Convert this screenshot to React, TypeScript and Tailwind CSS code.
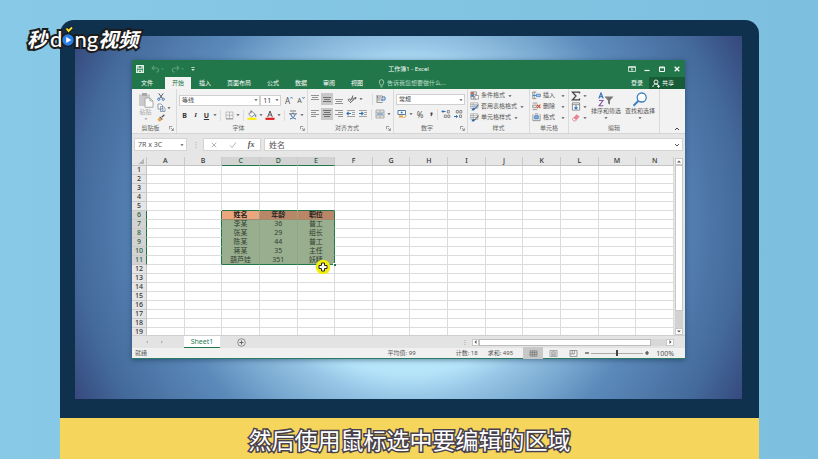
import React from "react";

type Kids = { children?: React.ReactNode };

function Caret({ className = "" }: { className?: string }) {
  return (
    <svg viewBox="0 0 6 6" className={`h-[6px] w-[6px] shrink-0 ${className}`} aria-hidden="true">
      <path d="M1.4 2.2h3.2L3 4.1z" fill="#555" />
    </svg>
  );
}

function Sep() {
  return <span className="mx-[2px] h-[11px] w-px shrink-0 bg-[#dcdcdc]" />;
}

function Tool({
  label,
  className = "w-[12px]",
  active = false,
  children,
}: Kids & { label: string; className?: string; active?: boolean }) {
  return (
    <button
      type="button"
      aria-label={label}
      className={`flex h-[12px] shrink-0 items-center justify-center ${active ? "bg-[#c8c8c8]" : ""} ${className}`}
    >
      {children}
    </button>
  );
}

function Group({ label, className = "", launcher = false, children }: Kids & { label: string; className?: string; launcher?: boolean }) {
  return (
    <section aria-label={label} className={`flex shrink-0 flex-col border-r border-[#dadada] ${className}`}>
      <div className="h-[35px]">{children}</div>
      <div className="flex h-[9px] items-center text-[#666]">
        <span className="flex-1 text-center">{label}</span>
        {launcher && (
          <svg viewBox="0 0 6 6" className="mr-[2px] h-[5px] w-[5px]" aria-hidden="true">
            <path d="M.5 4V.5H4M2.5 2.5l2.5 2.5M5.3 2.8v2.5H2.8" fill="none" stroke="#666" strokeWidth=".8" />
          </svg>
        )}
      </div>
    </section>
  );
}

function Lines({ rows, color = "#888" }: { rows: [number, number, number][]; color?: string }) {
  return (
    <svg viewBox="0 0 10 10" className="h-[10px] w-[10px]" aria-hidden="true">
      {rows.map(([x1, x2, y]) => (
        <path key={y} d={`M${x1} ${y}H${x2}`} stroke={color} strokeWidth=".9" />
      ))}
    </svg>
  );
}

function Indent({ out = false }: { out?: boolean }) {
  return (
    <svg viewBox="0 0 10 10" className="h-[10px] w-[10px]" aria-hidden="true">
      <path d="M1 1.5h8M6 3.5h3M6 5.5h3M1 7.5h8" stroke="#999" strokeWidth=".9" />
      <path d={out ? "M5 4.5H1M2.6 2.9L1 4.5l1.6 1.6" : "M1 4.5h4M3.4 2.9L5 4.5 3.4 6.1"} fill="none" stroke="#2f6eb5" strokeWidth="1.1" />
    </svg>
  );
}

function SheetIcon({ kind }: { kind: "cond" | "table" | "cell" | "insert" | "delete" | "format" }) {
  return (
    <svg viewBox="0 0 10 10" className="h-[9px] w-[9px] shrink-0" aria-hidden="true">
      {kind === "cond" && (
        <>
          <path d="M1 1h6v8H1zM1 3.6h6M1 6.3h6M4 1v8" fill="#fff" stroke="#777" strokeWidth=".8" />
          <path d="M1.3 1.3h2.5v2.2H1.3z" fill="#d0583f" />
          <path d="M1.3 4h2.5v2.2H1.3z" fill="#3c78bd" />
          <path d="M5.5 5h4v4h-4z" fill="#fff" stroke="#777" strokeWidth=".7" />
        </>
      )}
      {(kind === "table" || kind === "cell") && (
        <>
          <path d="M.8 1h8v6h-8zM.8 3h8M.8 5h8M3.5 1v6" fill="#fff" stroke="#999" strokeWidth=".8" />
          {kind === "table" && <path d="M3.7 3.2h4.8v3.6H3.7z" fill="#a8c8ea" />}
          <path d="M9.5 3L5 8" stroke="#555" strokeWidth="1.1" />
          <path d="M1.8 9.3c.4-2.3 2-3 3.6-2.2.6 1.8-1.3 2.6-3.6 2.2z" fill="#2f6eb5" />
        </>
      )}
      {kind === "insert" && (
        <>
          <path d="M.8 1.2h4M.8 8.5h4M.8 1v7.5M3 1v2M3 7v1.5" stroke="#777" strokeWidth=".8" />
          <path d="M5 3.5h4.3v2.8H5z" fill="#a8c8ea" stroke="#2f6eb5" strokeWidth=".7" />
          <path d="M4.6 4.9H1.5M2.8 3.6L1.5 4.9l1.3 1.3" fill="none" stroke="#2f6eb5" />
        </>
      )}
      {kind === "delete" && (
        <>
          <path d="M.8 1.2h5M.8 8.5h5M.8 3.5h4v2.8h-4z" fill="none" stroke="#777" strokeWidth=".8" />
          <path d="M5.5 3l3.8 3.8M9.3 3L5.5 6.8" stroke="#cf4632" strokeWidth="1.2" />
        </>
      )}
      {kind === "format" && (
        <>
          <path d="M1 1.5v7h8v-7M3 1h4" fill="none" stroke="#777" strokeWidth=".8" />
          <path d="M3 3h4v3.5H3z" fill="#7fb0e0" stroke="#2f6eb5" strokeWidth=".8" />
        </>
      )}
    </svg>
  );
}

function MenuRow({ kind, label, spread = false }: { kind: React.ComponentProps<typeof SheetIcon>["kind"]; label: string; spread?: boolean }) {
  return (
    <button type="button" className="flex h-[11px] w-full items-center gap-[2px]">
      <SheetIcon kind={kind} />
      <span className="whitespace-nowrap">{label}</span>
      <Caret className={spread ? "ml-auto" : ""} />
    </button>
  );
}

function Picker({ label, value, className = "" }: { label: string; value: string; className?: string }) {
  return (
    <label className={`flex h-[11px] items-center border border-[#d0d0d0] bg-white ${className}`}>
      <select aria-label={label} defaultValue={value} className="h-[9px] min-w-0 flex-1 appearance-none bg-transparent pl-[2px] leading-[9px] text-[#444] outline-none">
        <option>{value}</option>
      </select>
      <Caret />
    </label>
  );
}

function TitleBar() {
  return (
    <header className="flex h-[17px] items-center bg-[#21774a] text-white">
      <div className="flex flex-1 items-center pl-[4px]">
        <button type="button" aria-label="保存" className="mr-[7px]">
          <svg viewBox="0 0 8 8" className="block h-[8px] w-[8px]"><path d="M.6.6h6.8v6.8H.6zM2 .6v2.6h4V.6M2.3 7.4V5.2h3.4v2.2" fill="none" stroke="#e8f5ed" strokeWidth="1.1" /></svg>
        </button>
        <button type="button" aria-label="撤消" className="mr-[7px] flex">
          <svg viewBox="0 0 9 8" className="h-[8px] w-[9px]"><path d="M1 3h4.5c2.8 0 2.8 4 0 4M3.2.8L1 3l2.2 2.2" fill="none" stroke="#5a9c79" strokeWidth="1.1" /></svg>
          <svg viewBox="0 0 4 8" className="h-[8px] w-[4px]"><path d="M1 3.5h3L2.5 5z" fill="#5a9c79" /></svg>
        </button>
        <button type="button" aria-label="恢复" className="mr-[6px] flex">
          <svg viewBox="0 0 9 8" className="h-[8px] w-[9px]"><path d="M8 3H3.5C.7 3 .7 7 3.5 7M5.8.8L8 3 5.8 5.2" fill="none" stroke="#5a9c79" strokeWidth="1.1" /></svg>
          <svg viewBox="0 0 4 8" className="h-[8px] w-[4px]"><path d="M1 3.5h3L2.5 5z" fill="#5a9c79" /></svg>
        </button>
        <button type="button" aria-label="自定义">
          <svg viewBox="0 0 6 8" className="block h-[8px] w-[6px]"><path d="M1.3 2.5h3.4" stroke="#d5eadd" strokeWidth=".8" /><path d="M1.2 4h3.6L3 5.9z" fill="#d5eadd" /></svg>
        </button>
      </div>
      <h1 className="pt-[2px] text-[6px]">工作簿1 - Excel</h1>
      <div className="flex flex-1 items-center justify-end gap-[7px] pr-[4px]">
        <button type="button" aria-label="功能区显示选项">
          <svg viewBox="0 0 8 8" className="block h-[8px] w-[8px]"><path d="M.5 1.5h7v5h-7zM.5 2.5h7M4 6V3.5M2.9 4.6L4 3.5l1.1 1.1" fill="none" stroke="#e3f2e9" strokeWidth=".8" /></svg>
        </button>
        <button type="button" aria-label="最小化">
          <svg viewBox="0 0 8 8" className="block h-[8px] w-[8px]"><path d="M1.5 5.5h5" stroke="#fff" strokeWidth="1.2" /></svg>
        </button>
        <button type="button" aria-label="最大化">
          <svg viewBox="0 0 8 8" className="block h-[8px] w-[8px]"><path d="M1.5 2h5v4.5h-5zM1.5 2.8h5" fill="none" stroke="#fff" /></svg>
        </button>
        <button type="button" aria-label="关闭">
          <svg viewBox="0 0 8 8" className="block h-[8px] w-[8px]"><path d="M1.7 1.7l4.6 4.6M6.3 1.7L1.7 6.3" stroke="#fff" strokeWidth="1.3" /></svg>
        </button>
      </div>
    </header>
  );
}

const MENUS = ["文件", "开始", "插入", "页面布局", "公式", "数据", "审阅", "视图"];

function MenuBar() {
  return (
    <nav className="flex h-[12px] bg-[#21774a] text-white">
      {MENUS.map((m) => (
        <button
          key={m}
          type="button"
          className={`h-[12px] shrink-0 ${
            m === "开始"
              ? "w-[26px] bg-[#f3f3f3] text-[#21774a]"
              : m === "文件"
                ? "w-[33px] pr-[3px]"
                : m === "页面布局"
                  ? "w-[40px]"
                  : "w-[28px]"
          }`}
        >
          {m}
        </button>
      ))}
      <button type="button" className="ml-[7px] flex items-center gap-[2px] text-[#b9d9c7]">
        <svg viewBox="0 0 7 9" className="h-[9px] w-[7px]" aria-hidden="true"><path d="M2.5 6.2C2.5 5 1.2 4.5 1.2 3a2.3 2.3 0 014.6 0c0 1.5-1.3 2-1.3 3.2zM2.5 7.8h2" fill="none" stroke="#b9d9c7" strokeWidth=".8" /></svg>
        告诉我您想要做什么...
      </button>
      <button type="button" className="mr-[6px] ml-auto">登录</button>
      <button type="button" className="flex w-[36px] items-center gap-[2px] bg-[#185c37] pl-[3px]">
        <svg viewBox="0 0 8 9" className="h-[9px] w-[8px]" aria-hidden="true"><circle cx="4" cy="3" r="2" fill="none" stroke="#fff" strokeWidth=".9" /><path d="M.8 8c.2-2 1.5-3 3-3 1 0 1.7.3 2.2.9M5 7.3h3M6.5 5.8v3" fill="none" stroke="#fff" strokeWidth=".9" /></svg>
        共享
      </button>
    </nav>
  );
}

function Ribbon() {
  return (
    <div className="flex h-[45px] border-b border-[#d5d5d5] bg-[#f2f2f2] text-[#555]">
      <Group label="剪贴板" className="w-[45px]" launcher>
        <div className="flex pt-[2px] pl-[5px]">
          <button type="button" className="flex w-[17px] flex-col items-center pt-px text-[#aaa]">
            <svg viewBox="0 0 16 16" className="h-[16px] w-[16px]" aria-hidden="true"><path d="M1 2.5h11V14H1z" fill="#c9c9c9" /><path d="M4 1h5v3H4z" fill="#a9a9a9" /><path d="M7 6h5l3 3v6.3H7z" fill="#fafafa" stroke="#aaa" /><path d="M12 6v3h3" fill="none" stroke="#aaa" /></svg>
            <span className="leading-[8px]">粘贴</span>
            <Caret className="opacity-50" />
          </button>
          <div className="flex flex-col pl-[2px]">
            <Tool label="剪切" className="w-[10px]">
              <svg viewBox="0 0 9 9" className="h-[8px] w-[8px]"><path d="M2 .5l4 5.5M7 .5L3 6" stroke="#555" strokeWidth="1.1" /><circle cx="2" cy="7" r="1.3" fill="none" stroke="#2f6eb5" /><circle cx="7" cy="7" r="1.3" fill="none" stroke="#2f6eb5" /></svg>
            </Tool>
            <div className="flex h-[9px] items-center">
              <Tool label="复制" className="w-[10px]">
                <svg viewBox="0 0 9 9" className="h-[9px] w-[9px]"><path d="M1 1h3l1.5 1.5V6H1zM3.5 3.5H6L8 5.3v3.2H3.5z" fill="#fff" stroke="#7886a0" strokeWidth=".8" /><path d="M4.7 6h2M4.7 7.3h2" stroke="#2f6eb5" strokeWidth=".6" /></svg>
              </Tool>
              <Caret />
            </div>
            <Tool label="格式刷" className="w-[10px]">
              <svg viewBox="0 0 9 9" className="h-[8px] w-[8px]"><path d="M8.3.8L5.3 3.6" stroke="#555" strokeWidth="1.5" /><path d="M3.5 2.8l3 3-1 .9-3-3z" fill="#555" /><path d="M2.5 3.9l2.8 2.8L3 8.6.5 6.5z" fill="#e9a13b" /></svg>
            </Tool>
          </div>
        </div>
      </Group>

      <Group label="字体" className="w-[131px]" launcher>
        <div className="flex items-center pt-[5px] pl-[2px]">
          <Picker label="字体" value="等线" className="w-[82px]" />
          <Picker label="字号" value="11" className="w-[21px] text-[7px]" />
          <Tool label="增大字号" className="ml-[2px] w-[12px]"><span className="text-[8px]">A</span><svg viewBox="0 0 3 8" className="h-[8px] w-[3px]"><path d="M.3 2.5L1.5 1l1.2 1.5" fill="none" stroke="#2f6eb5" strokeWidth=".8" /></svg></Tool>
          <Tool label="减小字号"><span className="text-[7px]">A</span><svg viewBox="0 0 3 8" className="h-[8px] w-[3px]"><path d="M.3 1L1.5 2.5 2.7 1" fill="none" stroke="#2f6eb5" strokeWidth=".8" /></svg></Tool>
        </div>
        <div className="flex items-center pt-[3px] pl-[2px] text-[7px] text-[#333]">
          <Tool label="加粗" className="w-[11px]"><b>B</b></Tool>
          <Tool label="倾斜" className="w-[11px]"><i className="font-['Liberation_Serif',serif] font-bold">I</i></Tool>
          <Tool label="下划线" className="w-[11px]"><b className="underline">U</b></Tool>
          <Caret />
          <Sep />
          <Tool label="边框"><svg viewBox="0 0 9 9" className="h-[9px] w-[9px]"><path d="M1 1h7v6.5H1zM4.5 1v6.5M1 4.2h7" fill="none" stroke="#aaa" strokeWidth=".7" /><path d="M1 8h7" stroke="#888" strokeWidth=".8" /></svg></Tool>
          <Caret />
          <Sep />
          <Tool label="填充颜色"><svg viewBox="0 0 10 10" className="h-[10px] w-[10px]"><path d="M4.5 1L8 4.3 4.7 7 1.7 4.2zM4 .5v3" fill="#fff" stroke="#666" strokeWidth=".8" /><path d="M8.7 4.5v2.3" stroke="#2f6eb5" /><path d="M.5 7.7h9v2.2h-9z" fill="#ffee00" /></svg></Tool>
          <Caret />
          <Tool label="字体颜色"><svg viewBox="0 0 10 10" className="h-[10px] w-[10px]"><path d="M2.7 7L5 1l2.3 6M3.5 5h3" fill="none" stroke="#555" /><path d="M.5 7.7h9v2.2h-9z" fill="#e01b1b" /></svg></Tool>
          <Caret />
          <Sep />
          <Tool label="拼音"><svg viewBox="0 0 10 10" className="h-[10px] w-[10px]"><path d="M2 1h6M1 3.8h8" stroke="#666" strokeWidth=".9" /><path d="M5 2.5v1.5M7.3 4C6.5 7 4.5 8.5 2 9M2.7 4C3.5 7 5.5 8.5 8 9" fill="none" stroke="#3d6da8" /></svg></Tool>
          <Caret />
        </div>
      </Group>

      <Group label="对齐方式" className="w-[86px]" launcher>
        <div className="flex items-center pt-[4px] pl-[1px]">
          <Tool label="顶端对齐"><Lines rows={[[1, 9, 1.5], [2, 8, 3.5], [1, 9, 5.5]]} /></Tool>
          <Tool label="垂直居中" active><Lines color="#666" rows={[[1, 9, 3.5], [2, 8, 5.5], [1, 9, 7.5]]} /></Tool>
          <Tool label="底端对齐"><Lines rows={[[1, 9, 5.5], [2, 8, 7.5], [1, 9, 9.5]]} /></Tool>
          <Tool label="方向" className="w-[13px]"><svg viewBox="0 0 10 10" className="h-[10px] w-[10px]"><path d="M1 6c1-2 3-1 2.5.5S.8 7 1.5 6M4 6l2-4.5M5 4c1.5-.5 2 1 .5 2M3 9l6-5.5M9 3.5L7.2 4M9 3.5L8.6 5.3" fill="none" stroke="#555" strokeWidth=".9" /></svg></Tool>
          <Caret />
          <span className="ml-[6px]" />
          <Sep />
          <Tool label="自动换行"><svg viewBox="0 0 10 10" className="h-[10px] w-[10px]"><path d="M1 1v8M1.5 2h5v2h-5zM1.5 6h3M1.5 8.5h5" fill="none" stroke="#777" strokeWidth=".8" /><path d="M7 3h2v3H5.5M6.8 4.7L5.5 6l1.3 1.3" fill="none" stroke="#2f6eb5" strokeWidth=".9" /></svg></Tool>
        </div>
        <div className="flex items-center pt-[3px] pl-[1px]">
          <Tool label="左对齐"><Lines rows={[[1, 9, 1.5], [1, 6, 3.5], [1, 9, 5.5], [1, 6, 7.5]]} /></Tool>
          <Tool label="居中" active><Lines color="#666" rows={[[1, 9, 1.5], [2, 8, 3.5], [1, 9, 5.5], [2, 8, 7.5]]} /></Tool>
          <Tool label="右对齐"><Lines rows={[[1, 9, 1.5], [4, 9, 3.5], [1, 9, 5.5], [4, 9, 7.5]]} /></Tool>
          <Tool label="减少缩进"><Indent out /></Tool>
          <Tool label="增加缩进"><Indent /></Tool>
          <Sep />
          <Tool label="合并后居中"><svg viewBox="0 0 10 10" className="h-[10px] w-[10px]"><path d="M1 1h8v8H1zM1 3.2h8M1 6.8h8M5 1v2.2M5 6.8V9" fill="none" stroke="#999" strokeWidth=".8" /><path d="M2 5h6" stroke="#2f6eb5" /></svg></Tool>
          <Caret />
        </div>
      </Group>

      <Group label="数字" className="w-[74px]" launcher>
        <div className="px-[2px] pt-[5px]">
          <Picker label="数字格式" value="常规" />
        </div>
        <div className="flex items-center pt-[3px] pl-[2px] text-[8px]">
          <Tool label="会计数字格式"><svg viewBox="0 0 10 10" className="h-[10px] w-[10px]"><path d="M1 1.5h7.5v4H1z" fill="#fff" stroke="#3d6da8" strokeWidth=".9" /><circle cx="4.7" cy="3.5" r="1" fill="#3d6da8" /><path d="M2 6.5h4v2H2z" fill="#e9a13b" /><path d="M6.5 8.5c2 0 2.5-1 2.5-2.5" fill="none" stroke="#e9a13b" /></svg></Tool>
          <Caret />
          <Tool label="百分比">%</Tool>
          <Tool label="千位分隔" className="w-[9px]"><svg viewBox="0 0 6 8" className="h-[8px] w-[6px]"><path d="M2.5 2.5h2v2L3.2 6.3l-.7-.4.6-1.4h-.6z" fill="#444" /></svg></Tool>
          <Sep />
          <Tool label="增加小数位数"><svg viewBox="0 0 10 10" className="h-[10px] w-[10px]"><path d="M4.5 2.5H1M2.3 1.2L1 2.5l1.3 1.3" fill="none" stroke="#2f6eb5" /><path d="M6.3 1.5h2v2.5h-2zM3.3 6h2v2.5h-2zM6.8 6h2v2.5h-2z" fill="none" stroke="#777" strokeWidth=".8" /></svg></Tool>
          <Tool label="减少小数位数"><svg viewBox="0 0 10 10" className="h-[10px] w-[10px]"><path d="M1 7.5h3.5M3.2 6.2L4.5 7.5 3.2 8.8" fill="none" stroke="#2f6eb5" /><path d="M3.3 1.5h2v2.5h-2zM6.8 1.5h2v2.5h-2zM6.5 6h2v2.5h-2z" fill="none" stroke="#777" strokeWidth=".8" /></svg></Tool>
        </div>
      </Group>

      <Group label="样式" className="w-[62px]">
        <div className="pt-px pl-[2px]">
          <MenuRow kind="cond" label="条件格式" />
          <MenuRow kind="table" label="套用表格格式" />
          <MenuRow kind="cell" label="单元格样式" />
        </div>
      </Group>

      <Group label="单元格" className="w-[39px]">
        <div className="px-[2px] pt-px">
          <MenuRow kind="insert" label="插入" spread />
          <MenuRow kind="delete" label="删除" spread />
          <MenuRow kind="format" label="格式" spread />
        </div>
      </Group>

      <Group label="编辑" className="w-[91px]">
        <div className="flex pt-px pl-[2px]">
          <div className="flex w-[18px] flex-col">
            <button type="button" aria-label="自动求和" className="flex h-[11px] items-center gap-px">
              <svg viewBox="0 0 10 10" className="h-[10px] w-[10px]"><path d="M8.5 2.5V1.2H1.5L5 5 1.5 8.8h7V7.5" fill="none" stroke="#444" strokeWidth="1.3" /></svg>
              <Caret />
            </button>
            <button type="button" aria-label="填充" className="flex h-[11px] items-center gap-px">
              <svg viewBox="0 0 10 10" className="h-[9px] w-[10px]"><path d="M1 1h8v8H1zM1 3h8" fill="#fff" stroke="#777" strokeWidth=".9" /><path d="M5 3.5v4M3.2 6L5 7.8 6.8 6" fill="none" stroke="#2f6eb5" strokeWidth="1.2" /></svg>
              <Caret />
            </button>
            <button type="button" aria-label="清除" className="flex h-[11px] items-center gap-px">
              <svg viewBox="0 0 10 10" className="h-[9px] w-[10px]"><path d="M5.5 1.5L9 4 6 7.5 2.5 5z" fill="#e88591" /><path d="M2.3 5.3L5.6 7.7 4.5 8.7H2.5L1 7.2z" fill="#fff" stroke="#d9606f" strokeWidth=".8" /></svg>
              <Caret />
            </button>
          </div>
          <button type="button" className="flex w-[34px] flex-col items-center whitespace-nowrap">
            <svg viewBox="0 0 16 15" className="mt-[2px] h-[15px] w-[16px]" aria-hidden="true"><path d="M.8 6.5L3 1l2.2 5.5M1.5 4.7h3" fill="none" stroke="#2f6eb5" strokeWidth="1.1" /><path d="M1 8.5h4L1 13.8h4.3" fill="none" stroke="#8d52a8" strokeWidth="1.1" /><path d="M6.5 4.5h9l-3.5 4v4.3l-2-1.5V8.5z" fill="#777" /></svg>
            <span className="leading-[8px]">排序和筛选</span>
            <Caret />
          </button>
          <button type="button" className="flex w-[34px] flex-col items-center whitespace-nowrap">
            <svg viewBox="0 0 16 15" className="mt-[2px] h-[15px] w-[16px]" aria-hidden="true"><circle cx="9.7" cy="5.5" r="4.5" fill="#fff" stroke="#3f7fc1" strokeWidth="1.3" /><path d="M6.5 8.8L1.5 13.8" stroke="#3f7fc1" strokeWidth="2" /></svg>
            <span className="leading-[8px]">查找和选择</span>
            <Caret />
          </button>
        </div>
      </Group>

      <div className="flex flex-1 items-end justify-end px-[5px] py-[2px]">
        <button type="button" aria-label="折叠功能区">
          <svg viewBox="0 0 6 4" className="block h-[4px] w-[6px]"><path d="M1 3l2-2 2 2" fill="none" stroke="#444" /></svg>
        </button>
      </div>
    </div>
  );
}

function FormulaBar() {
  return (
    <div className="flex h-[23px] items-start bg-[#e6e6e6] pt-[4px] pr-[2px] pl-[2px] text-[7px] text-[#555]">
      <label className="flex h-[13px] w-[53px] items-center border border-[#d4d4d4] bg-white pr-px">
        <input aria-label="名称框" defaultValue="7R x 3C" className="h-[11px] w-full min-w-0 pl-[3px] outline-none" />
        <Caret />
      </label>
      <svg viewBox="0 0 16 13" className="h-[13px] w-[16px] shrink-0" aria-hidden="true"><path d="M9 4v1M9 6.5v1M9 9v1" stroke="#aaa" /></svg>
      <div className="flex h-[13px] w-[58px] shrink-0 items-center justify-around border border-[#d4d4d4] bg-white">
        <button type="button" aria-label="取消"><svg viewBox="0 0 8 8" className="block h-[8px] w-[8px]"><path d="M1.7 1.7l4.6 4.6M6.3 1.7L1.7 6.3" stroke="#b5b5b5" /></svg></button>
        <button type="button" aria-label="输入"><svg viewBox="0 0 8 8" className="block h-[8px] w-[8px]"><path d="M1 4.3l2 2.2L7 1.5" fill="none" stroke="#b5b5b5" /></svg></button>
        <button type="button" aria-label="插入函数" className="font-['Liberation_Serif',serif] text-[8px] font-bold italic">fx</button>
      </div>
      <label className="ml-[3px] flex h-[13px] flex-1 items-center border border-[#d4d4d4] bg-white">
        <input aria-label="编辑栏" defaultValue="姓名" className="h-[11px] min-w-0 flex-1 pl-[4px] text-[8px] outline-none" />
        <svg viewBox="0 0 6 4" className="mr-[2px] h-[4px] w-[6px]" aria-hidden="true"><path d="M1 1l2 2 2-2" fill="none" stroke="#555" /></svg>
      </label>
    </div>
  );
}

const COLUMNS = "ABCDEFGHIJKLMN".split("");
const DATA: string[][] = [
  ["姓名", "年龄", "职位"],
  ["李某", "36", "普工"],
  ["张某", "29", "组长"],
  ["陈某", "44", "普工"],
  ["蒋某", "35", "主任"],
  ["葫芦娃", "351", "妖精"],
];
const FIRST_ROW = 6;
const LAST_ROW = 11;

function Pointer() {
  return (
    <svg viewBox="0 0 16 16" className="absolute top-[3px] left-[17px] z-10 h-[16px] w-[16px]" aria-hidden="true">
      <circle cx="8" cy="8" r="7.3" fill="#f2ee0c" />
      <path d="M6.5 4h3v2.5H12v3H9.5V12h-3V9.5H4v-3h2.5z" fill="#fff" stroke="#222" strokeWidth="1" />
    </svg>
  );
}

function cellClass(row: number, col: number) {
  const inCols = col >= 2 && col <= 4;
  const inRows = row >= FIRST_ROW && row <= LAST_ROW;
  if (inCols && inRows) {
    const fill = row === FIRST_ROW ? (col === 2 ? "bg-[#eba67d] font-bold text-[#222]" : "bg-[#b98768] font-bold text-[#222]") : "bg-[#99ae8e] text-[#333f33]";
    const right = col === 4 ? "border-r border-r-[#21774a]" : "border-r border-r-[#8fa685]";
    const bottom = row === LAST_ROW ? "border-b border-b-[#21774a]" : row === FIRST_ROW ? "border-b border-b-[#a38a6c]" : "border-b border-b-[#99ae8e]";
    return `${fill} ${right} ${bottom}`;
  }
  const right = col === 1 && inRows ? "border-r border-r-[#21774a]" : "border-r border-r-[#dcdcdc]";
  const bottom = inCols && row === FIRST_ROW - 1 ? "border-b border-b-[#21774a]" : "border-b border-b-[#dcdcdc]";
  return `${right} ${bottom}`;
}

function Grid() {
  return (
    <div className="flex h-[178px] bg-[#e6e6e6]">
      <div className="h-full min-w-0 flex-1 overflow-hidden">
        <table className="w-full table-fixed border-separate border-spacing-0 bg-white text-center text-[7px] leading-[8px]">
          <thead>
            <tr>
              <th scope="col" aria-label="全选" className="h-[9px] w-[15px] border-r border-b border-[#c4c4c4] bg-[#e6e6e6] p-0">
                <svg viewBox="0 0 14 8" className="block h-[8px] w-[14px]"><path d="M12 1.5V7H6.5z" fill="#b5b5b5" /></svg>
              </th>
              {COLUMNS.map((c, i) => (
                <th
                  key={c}
                  scope="col"
                  className={`h-[9px] border-r border-b border-r-[#c9c9c9] p-0 font-medium ${
                    i >= 2 && i <= 4 ? "border-b-[#21774a] bg-[#d3d3d3] text-[#2c5f45]" : "border-b-[#c4c4c4] bg-[#e6e6e6] text-[#333]"
                  }`}
                >
                  {c}
                </th>
              ))}
            </tr>
          </thead>
          <tbody>
            {Array.from({ length: 19 }, (_, k) => k + 1).map((row) => {
              const hot = row >= FIRST_ROW && row <= LAST_ROW;
              return (
                <tr key={row}>
                  <th
                    scope="row"
                    className={`h-[9px] border-r border-b border-b-[#c9c9c9] p-0 font-medium ${
                      hot ? "border-r-[#21774a] bg-[#d3d3d3] text-[#2c5f45]" : "border-r-[#c4c4c4] bg-[#e6e6e6] text-[#333]"
                    }`}
                  >
                    {row}
                  </th>
                  {COLUMNS.map((c, col) => {
                    const text = hot && col >= 2 && col <= 4 ? DATA[row - FIRST_ROW][col - 2] : "";
                    const corner = row === LAST_ROW && col === 4;
                    return (
                      <td key={c} className={`h-[9px] p-0 ${corner ? "relative" : ""} ${cellClass(row, col)}`}>
                        {text}
                        {corner && <span className="absolute -right-[2px] -bottom-[2px] h-[3px] w-[3px] border-t border-l border-white bg-[#21774a]" />}
                        {corner && <Pointer />}
                      </td>
                    );
                  })}
                </tr>
              );
            })}
          </tbody>
        </table>
      </div>
      <div className="flex w-[11px] flex-col items-center pr-px">
        <button type="button" aria-label="向上滚动" className="mt-px flex h-[7px] w-[8px] items-center justify-center border border-[#c8c8c8] bg-white">
          <svg viewBox="0 0 4 3" className="h-[3px] w-[4px]"><path d="M0 2.5h4L2 .5z" fill="#555" /></svg>
        </button>
        <div className="h-[146px] w-[8px] border border-[#c8c8c8] bg-white" />
        <div className="w-[8px] flex-1 bg-[#d2d2d2]" />
        <button type="button" aria-label="向下滚动" className="flex h-[7px] w-[8px] items-center justify-center border border-[#c8c8c8] bg-white">
          <svg viewBox="0 0 4 3" className="h-[3px] w-[4px]"><path d="M0 .5h4L2 2.5z" fill="#555" /></svg>
        </button>
      </div>
    </div>
  );
}

function SheetBar() {
  return (
    <div className="flex h-[13px] items-center border-t border-[#cfcfcf] bg-[#e3e3e3]">
      <div className="flex w-[52px] gap-[9px] pl-[12px]">
        <button type="button" aria-label="上一张"><svg viewBox="0 0 6 6" className="block h-[6px] w-[6px]"><path d="M4 1.5v3L2 3z" fill="#b5b5b5" /></svg></button>
        <button type="button" aria-label="下一张"><svg viewBox="0 0 6 6" className="block h-[6px] w-[6px]"><path d="M2 1.5v3L4 3z" fill="#b5b5b5" /></svg></button>
      </div>
      <button type="button" className="h-[12px] w-[36px] border-b border-[#21774a] bg-white text-[7px] leading-[11px] text-[#2f7d54]">Sheet1</button>
      <button type="button" aria-label="新工作表" className="ml-[17px]">
        <svg viewBox="0 0 9 9" className="block h-[9px] w-[9px]"><circle cx="4.5" cy="4.5" r="3.8" fill="none" stroke="#777" strokeWidth=".8" /><path d="M4.5 2.5v4M2.5 4.5h4" stroke="#666" /></svg>
      </button>
      <svg viewBox="0 0 9 9" className="ml-auto h-[9px] w-[9px]" aria-hidden="true"><path d="M2 2v1M2 4v1M2 6v1" stroke="#aaa" /></svg>
      <button type="button" aria-label="向左滚动" className="flex h-[7px] w-[7px] items-center justify-center border border-[#c8c8c8] bg-white">
        <svg viewBox="0 0 3 4" className="h-[4px] w-[3px]"><path d="M2.5 0v4L.5 2z" fill="#555" /></svg>
      </button>
      <div className="h-[7px] w-[172px] border border-[#bdbdbd] bg-white" />
      <div className="h-[7px] w-[15px] bg-[#d8d8d8]" />
      <button type="button" aria-label="向右滚动" className="mr-[11px] flex h-[7px] w-[8px] items-center justify-center border border-[#c8c8c8] bg-white">
        <svg viewBox="0 0 3 4" className="h-[4px] w-[3px]"><path d="M.5 0v4l2-2z" fill="#555" /></svg>
      </button>
    </div>
  );
}

function StatusBar() {
  return (
    <footer className="flex h-[11px] items-center border-b border-[#2b7a63] bg-[#f0f0f0] pr-[11px] pl-[3px] whitespace-nowrap text-[#555]">
      <span>就绪</span>
      <span className="ml-auto">平均值: 99</span>
      <span className="ml-[40px]">计数: 18</span>
      <span className="ml-[10px] mr-[10px]">求和: 495</span>
      <Tool label="普通" active className="h-[10px] w-[20px]"><svg viewBox="0 0 10 8" className="h-[7px] w-[9px]"><path d="M1 1h8v6H1zM1 3h8M1 5h8M3.7 1v6M6.3 1v6" fill="none" stroke="#777" strokeWidth=".8" /></svg></Tool>
      <Tool label="页面布局" className="w-[20px]"><svg viewBox="0 0 10 8" className="h-[7px] w-[9px]"><path d="M1 .5h8v7H1zM3 2h4v4.5H3zM3.5 3.5h3M3.5 5h3" fill="none" stroke="#888" strokeWidth=".8" /></svg></Tool>
      <Tool label="分页预览" className="w-[20px]"><svg viewBox="0 0 10 8" className="h-[7px] w-[9px]"><path d="M1 .5h8v7H1zM3.5.5v4H1M3.5 4.5H6V.5" fill="none" stroke="#777" strokeWidth=".8" /></svg></Tool>
      <button type="button" aria-label="缩小" className="px-px"><svg viewBox="0 0 6 6" className="block h-[6px] w-[6px]"><path d="M1 3h4" stroke="#444" strokeWidth="1.2" /></svg></button>
      <input
        type="range"
        aria-label="显示比例"
        min={10}
        max={190}
        defaultValue={100}
        className="h-[8px] w-[52px] appearance-none bg-transparent [&::-webkit-slider-runnable-track]:h-px [&::-webkit-slider-runnable-track]:bg-[#aaa] [&::-webkit-slider-thumb]:-mt-[3px] [&::-webkit-slider-thumb]:h-[6px] [&::-webkit-slider-thumb]:w-[2px] [&::-webkit-slider-thumb]:appearance-none [&::-webkit-slider-thumb]:bg-[#444]"
      />
      <button type="button" aria-label="放大" className="px-px"><svg viewBox="0 0 6 6" className="block h-[6px] w-[6px]"><path d="M1 3h4M3 1v4" stroke="#444" strokeWidth="1.2" /></svg></button>
      <span className="ml-[5px] text-[7px]">100%</span>
    </footer>
  );
}

function Logo() {
  return (
    <div className="absolute top-[22px] left-[27px] flex items-center font-['Noto_Sans_CJK_SC',sans-serif] text-[20px] leading-[34px] font-bold text-white [-webkit-text-stroke:4px_#1c1c1c] [paint-order:stroke_fill]">
      <span className="italic">秒</span>
      <span className="pl-[3px] font-['Lato',sans-serif] text-[22px] font-medium">d</span>
      <svg viewBox="0 0 12 20" className="h-[20px] w-[12px] overflow-visible" aria-label="o" role="img">
        <path d="M4.5-.5l2 2.5L10-1.5" fill="none" stroke="#1c1c1c" strokeWidth="4" />
        <circle cx="6" cy="11" r="7" fill="#1c1c1c" />
        <path d="M4.5-.5l2 2.5L10-1.5" fill="none" stroke="#f7df2e" strokeWidth="2" />
        <circle cx="6" cy="11" r="5.7" fill="#2b7fe8" />
        <path d="M4.2 8v6l5-3z" fill="#fff" />
      </svg>
      <span className="font-['Lato',sans-serif] text-[22px] font-medium">ng</span>
      <span className="italic">视频</span>
    </div>
  );
}

export default function App() {
  return (
    <main className="relative flex min-h-screen flex-col overflow-hidden bg-linear-to-r from-[#87c9e7] to-[#7dbfde] pt-[20px] pr-[59px] pl-[60px] font-['Noto_Sans','Noto_Sans_CJK_SC',sans-serif]">
      <div className="rounded-t-[14px] bg-[#10314e] pt-[16px] pr-[17px] pb-[19px] pl-[15px]">
        <div className="bg-[radial-gradient(circle_at_50%_51%,#c4f0ff_30%,#b5e4fa_40%,#94c3e4_47%,#5b8aba_66%,#446a9b_87%,#35477c_100%)] px-[57px] pt-[24px] pb-[40px]">
          <div className="overflow-hidden text-[6px] leading-[9px] shadow-[0_1px_5px_rgba(10,40,70,0.5)]">
            <TitleBar />
            <MenuBar />
            <Ribbon />
            <FormulaBar />
            <Grid />
            <SheetBar />
            <StatusBar />
          </div>
        </div>
      </div>
      <div className="flex flex-1 items-center justify-center bg-[#f6d55d]">
        <p className="font-['Noto_Sans_CJK_SC',sans-serif] text-[23px] leading-[36px] font-normal whitespace-nowrap text-white [-webkit-text-stroke:3px_#46404c] [paint-order:stroke_fill]">
          然后使用鼠标选中要编辑的区域
        </p>
      </div>
      <Logo />
    </main>
  );
}
